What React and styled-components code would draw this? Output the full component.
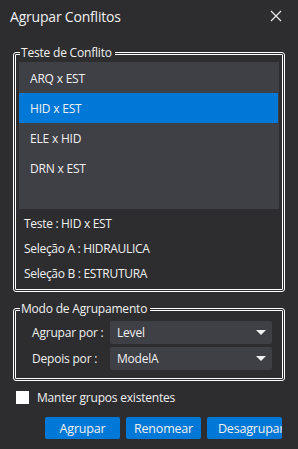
import React from "react";
import styled, { createGlobalStyle } from "styled-components";

const GlobalStyle = createGlobalStyle`
  html, body {
    margin: 0;
    padding: 0;
    background: #2d2d30;
  }
  body {
    font-family: "Open Sans", "Noto Sans", sans-serif;
    color: #f1f1f1;
  }
`;

const Window = styled.div`
  width: 298px;
  height: 449px;
  box-sizing: border-box;
  background: #2d2d30;
  display: flex;
  flex-direction: column;
  overflow: hidden;
`;

const TitleBar = styled.div`
  height: 36px;
  display: flex;
  align-items: center;
  justify-content: space-between;
  padding: 0 16px 0 10px;
  margin-top: -2px;
  box-sizing: border-box;
`;

const Title = styled.div`
  font-size: 14px;
  letter-spacing: -0.2px;
  color: #f1f1f1;
`;

const CloseButton = styled.div`
  width: 12px;
  height: 12px;
  display: flex;
`;

const Group = styled.fieldset`
  margin: ${(p) => p.$top}px 13px 0 13px;
  padding: 0 3px ${(p) => p.$bottom}px 3px;
  border: 3px double #ffffff;
  border-radius: 3px;
  min-width: 0;
`;

const Legend = styled.legend`
  font-size: 12px;
  line-height: 16px;
  padding: 0 3px 0 1px;
  margin-left: 1px;
  letter-spacing: -0.2px;
  color: #f1f1f1;
`;

const List = styled.div`
  background: #3f3f46;
  height: 147px;
  margin-top: 1px;
  padding-top: 1px;
  box-sizing: border-box;
`;

const ListItem = styled.div`
  height: 30px;
  display: flex;
  align-items: center;
  padding-left: 11px;
  margin-right: 1px;
  font-size: 12px;
  letter-spacing: -0.2px;
  background: ${(p) => (p.$selected ? "#0078d7" : "transparent")};
`;

const InfoLine = styled.div`
  height: 25px;
  line-height: 25px;
  padding-left: 5px;
  font-size: 12px;
  letter-spacing: -0.3px;
`;

const Info = styled.div`
  margin-top: 2px;
`;

const Spacer = styled.div`
  height: ${(p) => p.$h}px;
`;

const Row = styled.div`
  display: flex;
  align-items: center;
  height: 23px;
  padding-left: 13px;
  padding-right: 7px;
  & + & {
    margin-top: 3px;
  }
`;

const Label = styled.div`
  width: 78px;
  flex: none;
  font-size: 12px;
  letter-spacing: -0.2px;
`;

const Combo = styled.div`
  flex: 1;
  height: 23px;
  background: #3f3f46;
  border-radius: 2px;
  display: flex;
  align-items: center;
  justify-content: space-between;
  padding: 0 6px 0 7px;
  font-size: 12px;
  letter-spacing: -0.2px;
`;

const Arrow = styled.div`
  width: 0;
  height: 0;
  border-left: 5px solid transparent;
  border-right: 5px solid transparent;
  border-top: 5px solid #f1f1f1;
`;

const CheckRow = styled.label`
  display: flex;
  align-items: center;
  margin: 8px 0 0 16px;
  font-size: 12px;
  letter-spacing: -0.2px;
`;

const Box = styled.span`
  width: 13px;
  height: 13px;
  background: #ffffff;
  margin-right: 8px;
  flex: none;
`;

const Buttons = styled.div`
  display: flex;
  justify-content: flex-end;
  gap: 6px;
  padding-right: 16px;
  margin-top: 11px;
`;

const Button = styled.button`
  width: 75px;
  height: 22px;
  border: none;
  border-radius: 2px;
  background: #0078d7;
  color: #f1f1f1;
  font-family: "Open Sans", "Noto Sans", sans-serif;
  font-size: 12.5px;
  letter-spacing: -0.2px;
  overflow: hidden;
  white-space: nowrap;
  text-align: ${(p) => (p.$clip ? "left" : "center")};
  padding: ${(p) => (p.$clip ? "0 0 0 11px" : "0")};
`;

const items = ["ARQ x EST", "HID x EST", "ELE x HID", "DRN x EST"];

export default function App() {
  return (
    <Window>
      <GlobalStyle />
      <TitleBar>
        <Title>Agrupar Conflitos</Title>
        <CloseButton>
          <svg width="12" height="12" viewBox="0 0 12 12">
            <path d="M1 1L11 11M11 1L1 11" stroke="#f1f1f1" strokeWidth="1.1" />
          </svg>
        </CloseButton>
      </TitleBar>

      <Group $top={11} $bottom={3}>
        <Legend>Teste de Conflito</Legend>
        <List>
          {items.map((it, i) => (
            <ListItem key={it} $selected={i === 1}>
              {it}
            </ListItem>
          ))}
        </List>
        <Info>
          <InfoLine>Teste : HID x EST</InfoLine>
          <InfoLine>Seleção A : HIDRAULICA</InfoLine>
          <InfoLine>Seleção B : ESTRUTURA</InfoLine>
        </Info>
      </Group>

      <Group $top={9} $bottom={8}>
        <Legend>Modo de Agrupamento</Legend>
        <Spacer $h={4} />
        <Row>
          <Label>Agrupar por :</Label>
          <Combo>
            Level
            <Arrow />
          </Combo>
        </Row>
        <Row>
          <Label>Depois por :</Label>
          <Combo>
            ModelA
            <Arrow />
          </Combo>
        </Row>
      </Group>

      <CheckRow>
        <Box />
        Manter grupos existentes
      </CheckRow>

      <Buttons>
        <Button>Agrupar</Button>
        <Button>Renomear</Button>
        <Button $clip>Desagrupar</Button>
      </Buttons>
    </Window>
  );
}
